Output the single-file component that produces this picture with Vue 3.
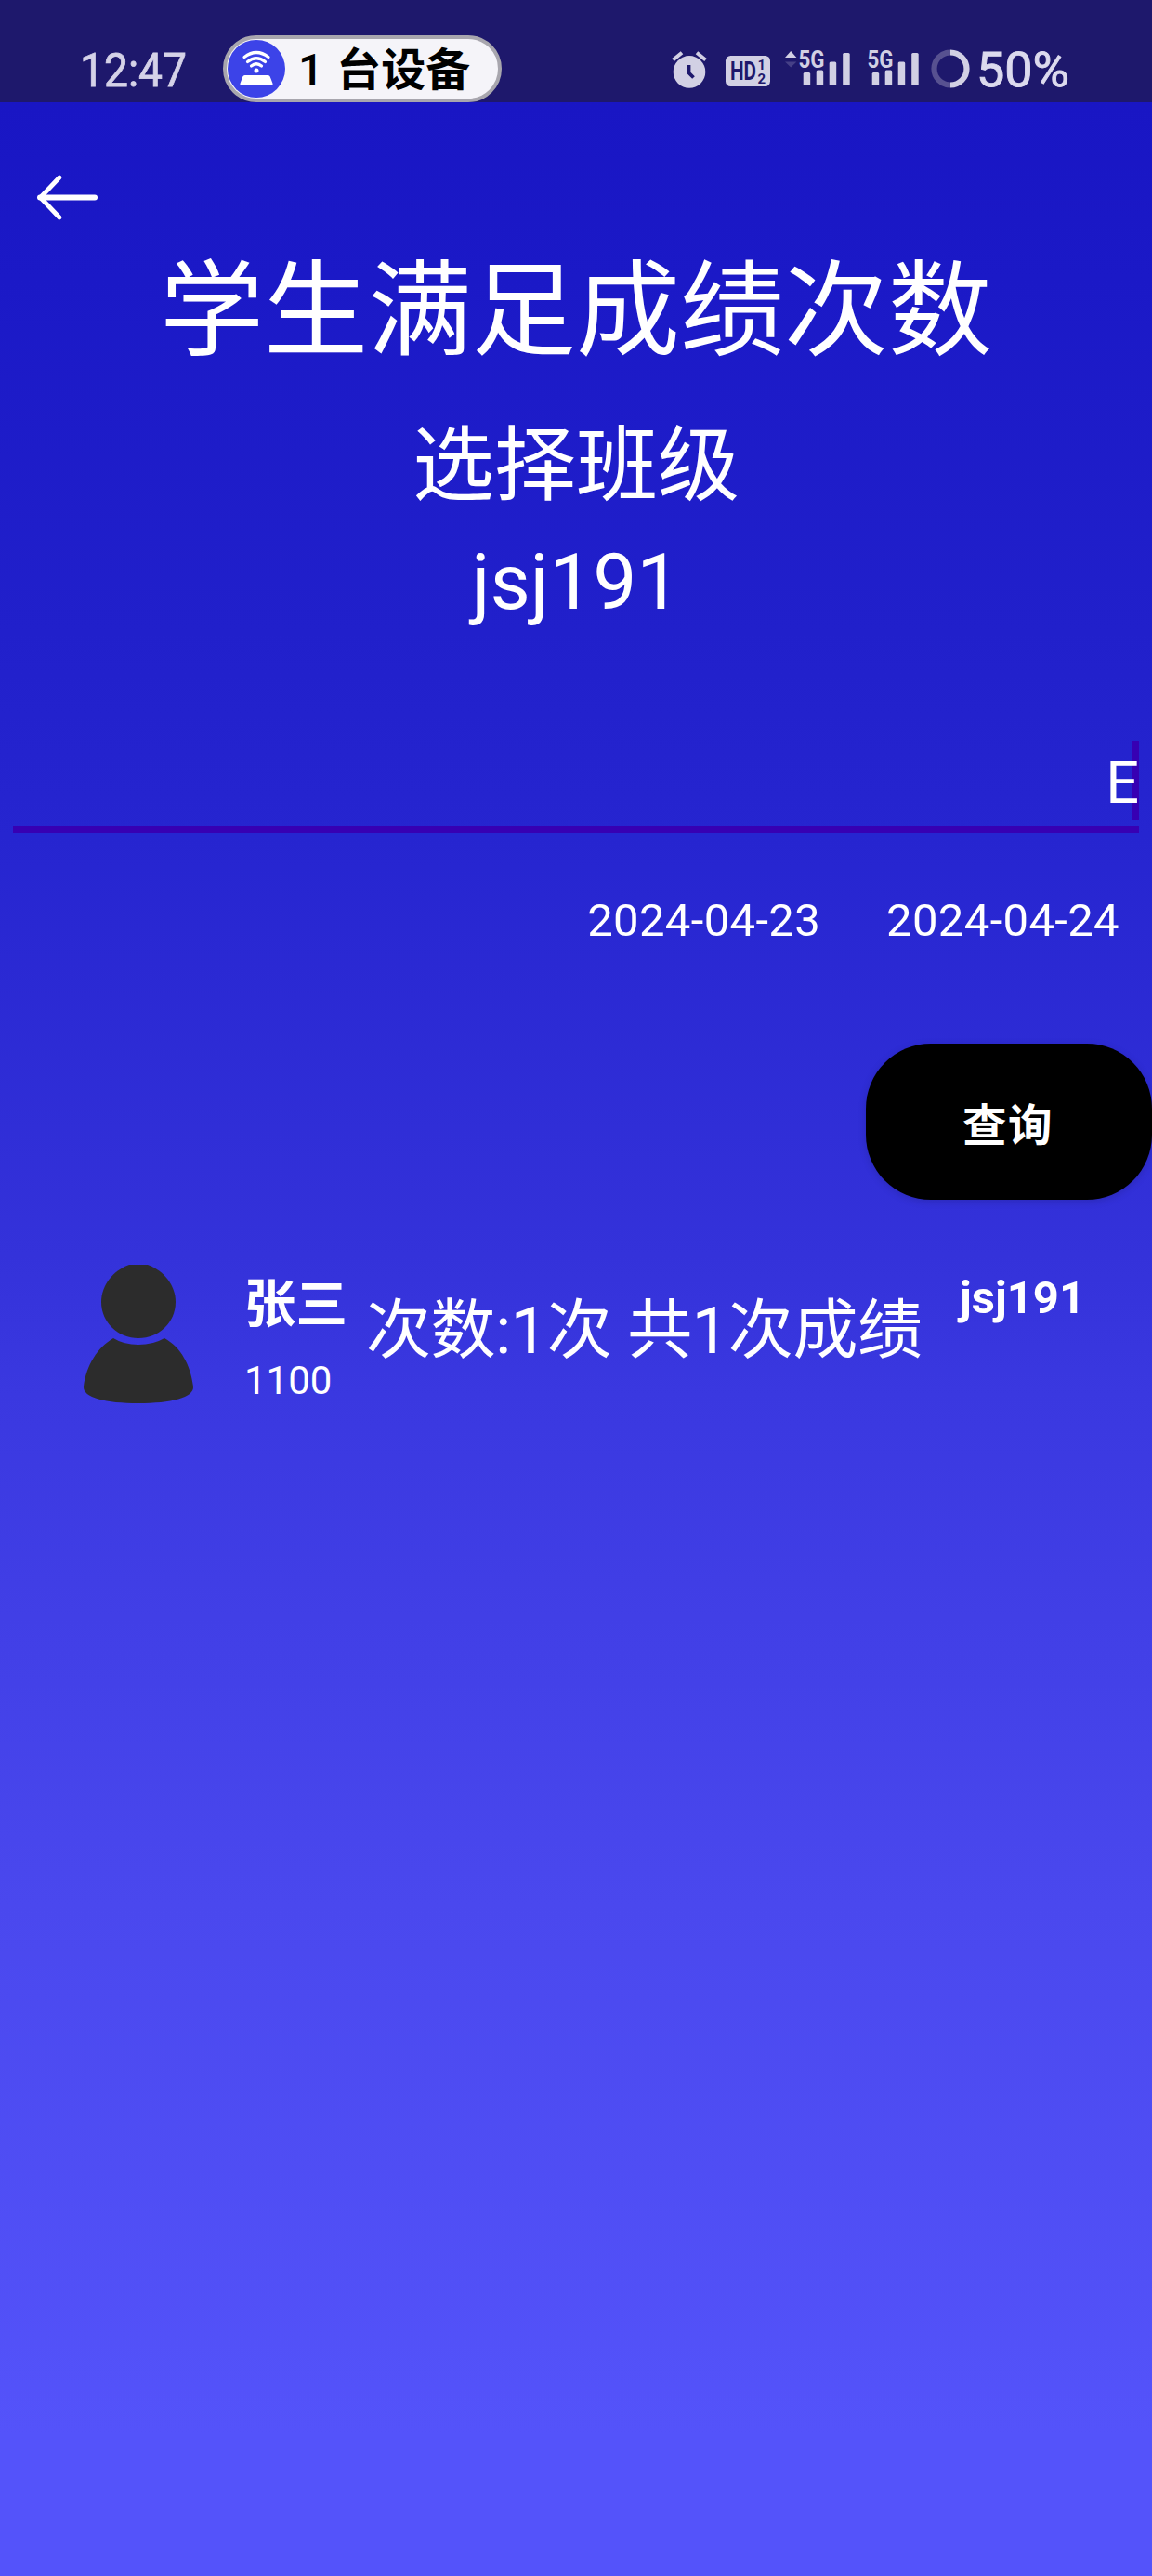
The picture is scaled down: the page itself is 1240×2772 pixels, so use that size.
<script setup>
import { ref } from 'vue'

const title = '学生满足成绩次数'
const className = ref('jsj191')
const score = ref('E')
const dates = ref(['2024-04-23', '2024-04-24'])
const students = ref([
  { id: '1100', name: '张三', className: 'jsj191', summary: '次数:1次 共1次成绩' }
])
const signals = [{ id: 1, data: true }, { id: 2, data: false }]
</script>

<template>
  <div class="screen">
    <header class="status">
      <svg class="clock" width="116" height="50" viewBox="0 0 116 50">
        <text x="0" y="42.500" font-size="50" textLength="115" lengthAdjust="spacingAndGlyphs">12:47</text>
      </svg>
      <div class="pill">
        <svg class="hotspot" width="62" height="62" viewBox="0 0 62 62">
          <circle cx="31" cy="31" r="31" fill="#3c43e8" />
          <g fill="none" stroke="#fff" stroke-width="3.200" stroke-linecap="round">
            <path d="M18 18.500Q31 8.500 44 18.500" />
            <path d="M21.500 23.500Q31 16 40.500 23.500" />
            <path d="M25.500 28Q31 23.500 36.500 28" />
          </g>
          <circle cx="31" cy="33" r="2.500" fill="#fff" />
          <path d="M18.500 38h25q1.700 0 2.200 1.600l2.700 7q.8 2.400-1.600 2.400H15.200q-2.400 0-1.600-2.400l2.700-7Q16.800 38 18.500 38z" fill="#fff" />
        </svg>
        <span class="pill-text">1 <b>台设备</b></span>
      </div>
      <div class="icons">
        <svg class="alarm" width="38" height="40" viewBox="0 0 38 40">
          <circle cx="19" cy="22.400" r="17.300" fill="#d2d0e4" />
          <path d="M1.500 9.500L11 1.800M36.500 9.500L27 1.800" stroke="#d2d0e4" stroke-width="4" />
          <path d="M18.500 15v8.500l5 5" fill="none" stroke="#1e186c" stroke-width="3.800" />
        </svg>
        <svg class="hd" width="48" height="33" viewBox="0 0 48 33">
          <rect width="48" height="33" rx="5.500" fill="#d2d0e4" />
          <g fill="#1e186c" font-weight="700">
            <text x="5" y="26" font-size="27" textLength="28" lengthAdjust="spacingAndGlyphs">HD</text>
            <text x="34.500" y="14.500" font-size="15">1</text>
            <text x="34.500" y="29.500" font-size="15">2</text>
          </g>
        </svg>
        <svg v-for="s in signals" :key="s.id" class="signal" width="72" height="40" viewBox="0 0 72 40">
          <template v-if="s.data">
            <path d="M0 7L6.200 0l6.200 7z" fill="#d2d0e4" />
            <path d="M0 11.500l6.200 6 6.200-6z" fill="#464087" />
          </template>
          <g fill="#d2d0e4">
            <rect x="19.700" y="23" width="7.500" height="14" rx="1.500" />
            <rect x="33.700" y="20.500" width="7.500" height="16.500" rx="1.500" />
            <rect x="47.700" y="11.500" width="7.500" height="25.500" rx="1.500" />
            <rect x="62.200" y="2" width="7.500" height="35" rx="1.500" />
          </g>
          <text x="14.500" y="18" font-size="26" font-weight="700" fill="#d2d0e4" textLength="28" lengthAdjust="spacingAndGlyphs">5G</text>
        </svg>
        <svg class="ring" width="42" height="42" viewBox="0 0 42 42" fill="none" stroke-width="6.200">
          <path d="M21 3.500a17.500 17.500 0 0 0 0 35" stroke="#575190" />
          <path d="M21 3.500a17.500 17.500 0 0 1 0 35" stroke="#d2d0e4" />
        </svg>
        <svg class="battery" width="100" height="50" viewBox="0 0 100 50">
          <text x="-1" y="42.500" font-size="51" textLength="100" lengthAdjust="spacingAndGlyphs">50%</text>
        </svg>
      </div>
    </header>

    <nav class="nav">
      <svg width="70" height="54" viewBox="0 0 70 54" fill="none" stroke="#fff" stroke-linecap="round" stroke-linejoin="round">
        <path d="M4 26.500h59" stroke-width="6" />
        <path d="M25 5L4.500 26.500 25 48" stroke-width="4.800" />
      </svg>
    </nav>

    <h1 class="title">{{ title }}</h1>
    <h2 class="subtitle">选择班级</h2>
    <div class="class-name">{{ className }}</div>

    <div class="field">
      <span class="value">{{ score }}</span>
    </div>

    <div class="dates">
      <span v-for="d in dates" :key="d">{{ d }}</span>
    </div>

    <button class="query" type="button">查询</button>

    <ul class="list">
      <li v-for="s in students" :key="s.id" class="row">
        <svg class="avatar" width="120" height="150" viewBox="0 0 120 150" fill="#2c2c2c">
          <path d="M50 0h20C87 6 100 22 100 40c0 22-18 39-40 39S20 62 20 40C20 22 33 6 50 0z" />
          <path d="M33 79q11 7 27 7t28-7C106 89 116 108 119 131c1 12-24 18-59 18S0 143 1 131C4 108 16 89 33 79z" />
        </svg>
        <div class="who">
          <strong>{{ s.name }}</strong>
          <span>{{ s.id }}</span>
        </div>
        <div class="summary">{{ s.summary }}</div>
        <div class="tag">{{ s.className }}</div>
      </li>
    </ul>
  </div>
</template>

<style>
body {
  margin: 0;
}
</style>

<style scoped>
.screen {
  width: 1240px;
  height: 2772px;
  overflow: hidden;
  display: flex;
  flex-direction: column;
  background: linear-gradient(180deg, #1916c4 110px, #1b19c7 300px, #2120cb 680px, #2625d0 900px, #3432da 1350px, #3a38e0 1500px, #4a48ee 2050px, #5453fa 2620px);
  color: #fff;
  font-family: Roboto, "Noto Sans CJK SC", sans-serif;
}
.status {
  height: 110px;
  display: flex;
  flex: none;
  align-items: flex-start;
  background: #1e186c;
}
.status svg {
  display: block;
  flex: none;
  overflow: visible;
}
.clock {
  margin: 50px 0 0 86px;
  fill: #d5d2e8;
  stroke: #d5d2e8;
  stroke-width: 0.8;
}
.pill {
  box-sizing: border-box;
  width: 300px;
  height: 72px;
  margin: 38px 0 0 38px;
  padding-left: 1px;
  display: flex;
  align-items: center;
  border: 4px solid #a8a6ae;
  border-radius: 36px;
  background: #f5f4f9;
  color: #000;
}
.pill-text {
  margin: 4px 0 0 14px;
  font-size: 48px;
  line-height: 62px;
  font-weight: 500;
  white-space: pre;
  word-spacing: 2px;
}
.pill-text b {
  font-weight: 700;
}
.icons {
  display: flex;
  align-items: flex-start;
}
.alarm {
  margin: 55px 0 0 183px;
}
.hd {
  margin: 60px 0 0 20px;
}
.signal {
  margin: 54.500px 0 0 16px;
}
.signal + .signal {
  margin-left: 2px;
}
.ring {
  margin: 52.500px 0 0 10.500px;
}
.battery {
  margin: 50px 0 0 8px;
  fill: #dcdaee;
  stroke: #dcdaee;
  stroke-width: 0.9;
}
.nav {
  height: 160px;
  flex: none;
  box-sizing: border-box;
  padding: 76px 0 0 39px;
}
.title,
.subtitle {
  margin: 0;
  font-weight: 400;
  text-align: center;
}
.title {
  padding-top: 1px;
  font-size: 112px;
  line-height: 130px;
}
.subtitle {
  margin-top: 45px;
  font-size: 88px;
  line-height: 110px;
}
.class-name {
  margin-top: 21px;
  text-align: center;
  font-size: 84px;
  line-height: 100px;
}
.field {
  margin: 120px 14px 0;
  height: 92px;
  border-bottom: 7px solid #3700b3;
  display: flex;
  justify-content: flex-end;
}
.value {
  height: 85px;
  font-size: 63px;
  line-height: 91px;
  background: linear-gradient(#3700b3, #3700b3) right / 7px 100% no-repeat;
}
.dates {
  margin-top: 65px;
  padding-right: 35px;
  display: flex;
  justify-content: flex-end;
  gap: 71px;
  font-size: 49px;
  line-height: 60px;
  letter-spacing: 0.350px;
}
.query {
  align-self: flex-end;
  margin-top: 102px;
  width: 308px;
  height: 168px;
  padding: 9px 2px 0 0;
  border: 0;
  border-radius: 70px;
  background: #000;
  box-shadow: 0 2px 8px rgba(0, 0, 0, 0.15);
  color: #fff;
  font: 700 47.500px/60px Roboto, "Noto Sans CJK SC", sans-serif;
  letter-spacing: 1.500px;
}
.list {
  margin: 70px 0 0;
  padding: 0 0 0 89px;
  list-style: none;
}
.row {
  display: flex;
  align-items: flex-start;
}
.avatar {
  display: block;
}
.who {
  width: 131px;
  margin-left: 54px;
  display: flex;
  flex-direction: column;
}
.who strong {
  margin-top: 9px;
  font-size: 55.500px;
  line-height: 70px;
  font-weight: 700;
}
.who span {
  margin-top: 21px;
  font-size: 42px;
  line-height: 50px;
}
.summary {
  margin-top: 26px;
  width: 639px;
  font-size: 70px;
  line-height: 90px;
  letter-spacing: -0.400px;
  white-space: nowrap;
}
.tag {
  margin-top: 10px;
  font-size: 49px;
  line-height: 52px;
  font-weight: 700;
}
</style>
